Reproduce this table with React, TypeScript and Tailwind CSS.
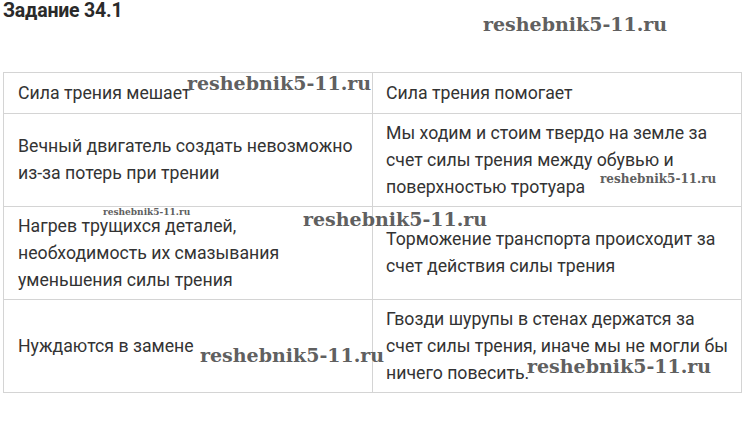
const rows: [string[], string[]][] = [
  [["Сила трения мешает"], ["Сила трения помогает"]],
  [
    ["Вечный двигатель создать невозможно", "из-за потерь при трении"],
    ["Мы ходим и стоим твердо на земле за", "счет силы трения между обувью и", "поверхностью тротуара"],
  ],
  [
    ["Нагрев трущихся деталей,", "необходимость их смазывания", "уменьшения силы трения"],
    ["Торможение транспорта происходит за", "счет действия силы трения"],
  ],
  [
    ["Нуждаются в замене"],
    ["Гвозди шурупы в стенах держатся за", "счет силы трения, иначе мы не могли бы", "ничего повесить."],
  ],
];

const rowHeights = ["h-[41px]", "h-[93px]", "h-[93px]", "h-[93px]"];

function Lines({ lines }: { lines: string[] }) {
  return (
    <>
      {lines.map((l, i) => (
        <span key={i} className="block whitespace-nowrap">
          {l}
        </span>
      ))}
    </>
  );
}

function Mark({ className }: { className: string }) {
  return (
    <span
      className={`absolute whitespace-nowrap font-bold leading-none text-[#606060] ${className}`}
      style={{ fontFamily: '"DejaVu Serif", "Liberation Serif", serif' }}
    >
      reshebnik5-11.ru
    </span>
  );
}

export default function App() {
  return (
    <div
      className="relative h-[430px] w-[745px] overflow-hidden bg-white text-[#333]"
      style={{ fontFamily: "Roboto, Arial, sans-serif" }}
    >
      <h2 className="pl-[3px] text-[19.5px] font-bold leading-[22px] tracking-[-0.2px] text-[#2a2a2a]">
        Задание 34.1
      </h2>

      <table className="mt-[50px] ml-[3px] w-[738px] table-fixed border-collapse text-[17.7px] leading-[27px]">
        <colgroup>
          <col className="w-[369px]" />
          <col className="w-[369px]" />
        </colgroup>
        <tbody>
          {rows.map(([left, right], i) => (
            <tr key={i} className={rowHeights[i]}>
              <td className="border border-[#d4d4d4] px-[14px] align-middle">
                <Lines lines={left} />
              </td>
              <td className="border border-[#d4d4d4] px-[13px] align-middle">
                <Lines lines={right} />
              </td>
            </tr>
          ))}
        </tbody>
      </table>

      <Mark className="left-[483px] top-[15px] text-[19px]" />
      <Mark className="left-[187px] top-[74px] text-[19px]" />
      <Mark className="left-[600px] top-[173px] text-[12px]" />
      <Mark className="left-[103px] top-[208px] text-[9px]" />
      <Mark className="left-[303px] top-[210px] text-[19px]" />
      <Mark className="left-[200px] top-[346px] text-[19px]" />
      <Mark className="left-[527px] top-[357px] text-[19px]" />
    </div>
  );
}
